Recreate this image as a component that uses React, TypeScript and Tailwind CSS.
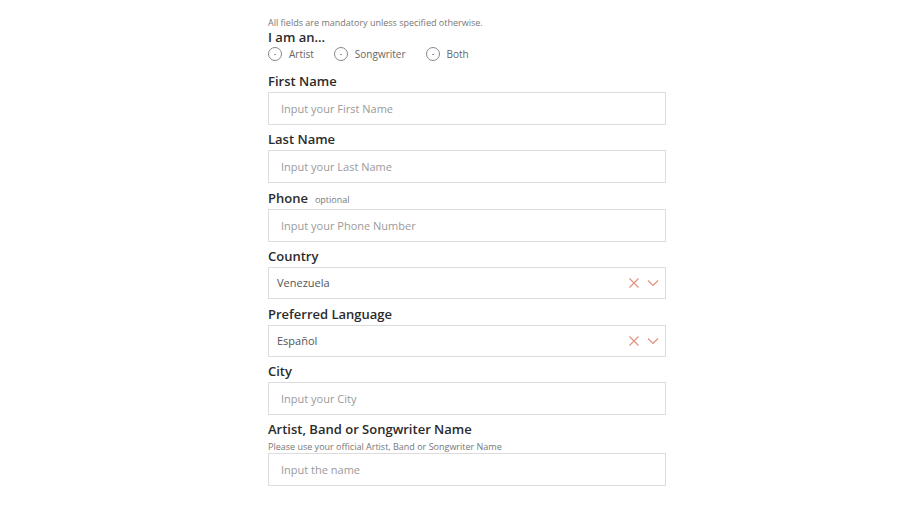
import React, { useState } from "react";

type Role = "artist" | "songwriter" | "both";

const font = { fontFamily: "'Open Sans', 'Liberation Sans', sans-serif" };

const Label = ({ text, optional }: { text: string; optional?: boolean }) => (
  <div className="flex h-[16px] items-baseline gap-[7px] text-[13px] font-semibold leading-[16px] text-[#2b2b2b]">
    {text}
    {optional && <span className="text-[9px] font-normal leading-[16px] text-[#777]">optional</span>}
  </div>
);

const TextInput = ({ placeholder }: { placeholder: string }) => (
  <input
    placeholder={placeholder}
    className="h-[33px] w-full border border-[#dcdcdc] bg-white px-[12px] text-[11px] text-[#444] outline-none placeholder:text-[#9a9a9a]"
  />
);

const SelectBox = ({ value }: { value: string }) => (
  <div className="flex h-[32px] w-full items-center border border-[#dcdcdc] bg-white pl-[8px] pr-[6px]">
    <span className="flex-1 text-[11px] text-[#555]">{value}</span>
    <svg width="12" height="12" viewBox="0 0 12 12" className="mr-[7px]">
      <path d="M1.5 1.5l9 9M10.5 1.5l-9 9" stroke="#e0907c" strokeWidth="1.1" fill="none" />
    </svg>
    <svg width="12" height="8" viewBox="0 0 12 8">
      <path d="M1 1.5l5 5 5-5" stroke="#e0907c" strokeWidth="1.2" fill="none" />
    </svg>
  </div>
);

const Radio = ({ label, checked, onClick }: { label: string; checked: boolean; onClick: () => void }) => (
  <button type="button" onClick={onClick} className="flex h-[14px] items-center gap-[7px] text-[10px] text-[#666]">
    <span className="flex h-[14px] w-[14px] items-center justify-center rounded-full border border-[#888]">
      <span className={checked ? "h-[6px] w-[6px] rounded-full bg-[#555]" : "h-[1px] w-[2px] bg-[#999]"} />
    </span>
    {label}
  </button>
);

const Field = ({ children, loose }: { children: React.ReactNode; loose?: boolean }) => (
  <div className={loose ? "mt-[7px] flex flex-col gap-[3px]" : "mt-[6px] flex flex-col gap-[3px]"}>{children}</div>
);

export default function App() {
  const [role, setRole] = useState<Role | null>(null);

  return (
    <div className="min-h-screen bg-white" style={font}>
      <form className="ml-[268px] flex w-[398px] flex-col pt-[17px]">
        <p className="text-[9px] leading-[12px] text-[#777]">All fields are mandatory unless specified otherwise.</p>
        <Label text="I am an..." />
        <div className="mt-[2px] flex gap-[20px]">
          <Radio label="Artist" checked={role === "artist"} onClick={() => setRole("artist")} />
          <Radio label="Songwriter" checked={role === "songwriter"} onClick={() => setRole("songwriter")} />
          <Radio label="Both" checked={role === "both"} onClick={() => setRole("both")} />
        </div>

        <div className="mt-[12px] flex flex-col gap-[3px]">
          <Label text="First Name" />
          <TextInput placeholder="Input your First Name" />
        </div>
        <Field>
          <Label text="Last Name" />
          <TextInput placeholder="Input your Last Name" />
        </Field>
        <Field loose>
          <Label text="Phone" optional />
          <TextInput placeholder="Input your Phone Number" />
        </Field>
        <Field>
          <Label text="Country" />
          <SelectBox value="Venezuela" />
        </Field>
        <Field loose>
          <Label text="Preferred Language" />
          <SelectBox value="Español" />
        </Field>
        <Field>
          <Label text="City" />
          <TextInput placeholder="Input your City" />
        </Field>
        <div className="mt-[6px] flex flex-col">
          <Label text="Artist, Band or Songwriter Name" />
          <p className="mt-[4px] text-[9px] leading-[12px] text-[#777]">Please use your official Artist, Band or Songwriter Name</p>
          <TextInput placeholder="Input the name" />
        </div>
      </form>
    </div>
  );
}
